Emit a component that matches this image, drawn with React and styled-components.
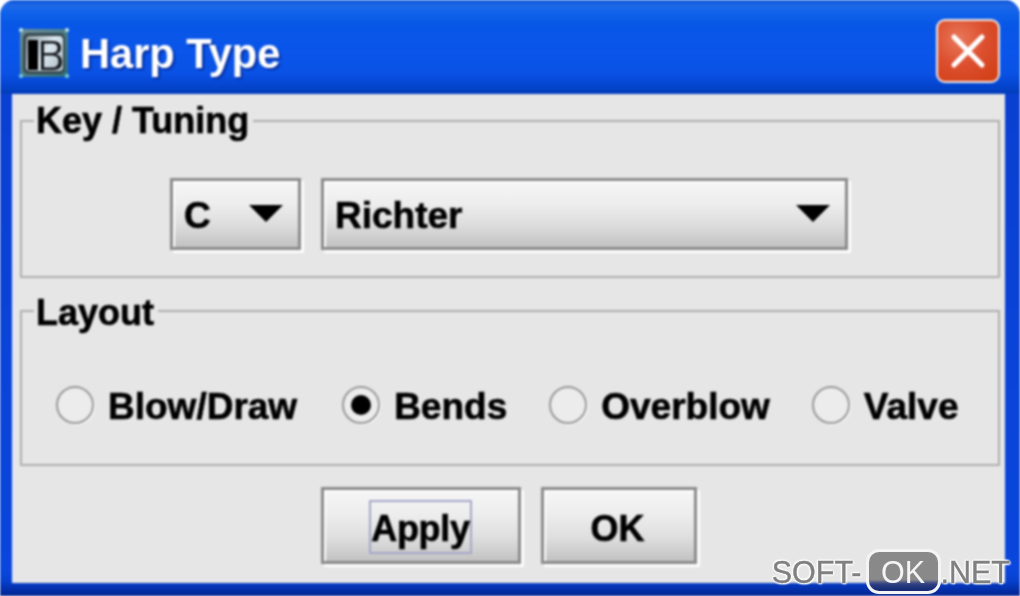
import React from 'react';
import styled, { createGlobalStyle } from 'styled-components';

const Global = createGlobalStyle`
  html, body { margin: 0; padding: 0; background: #fff; }
  body { width: 1020px; height: 596px; overflow: hidden; font-family: "Liberation Sans", Arial, sans-serif; }
  * { box-sizing: border-box; }
`;

const Page = styled.div`
  position: relative;
  width: 1020px;
  height: 596px;
  overflow: hidden;
`;

const Frame = styled.div`
  width: 1020px;
  height: 596px;
  display: flex;
  flex-direction: column;
  border-radius: 15px 15px 0 0;
  background: linear-gradient(180deg, #0a3fd0 0, #0a46dc 96%, #0640cc 97.5%, #03238f 100%);
  filter: blur(0.8px);
`;

const TitleBar = styled.div`
  height: 94px;
  flex: none;
  display: flex;
  align-items: center;
  padding: 8px 20px 0 19px;
  border-radius: 15px 15px 0 0;
  background: linear-gradient(180deg, #0d55d8 0, #1f69e6 6%, #0f62ea 14%, #0857e6 26%, #0a55ea 55%, #0a52e6 78%, #0444cc 92%, #033cb8 100%);
`;

const AppIcon = styled.svg`
  width: 50px;
  height: 50px;
  flex: none;
  margin-top: 4px;
`;

const Title = styled.h1`
  margin: 6px 0 0 11px;
  flex: 1;
  font-size: 41.6px;
  font-weight: 700;
  line-height: 48px;
  color: #fff;
  text-shadow: 2px 2px 2px #0a2f9c;
`;

const CloseBtn = styled.button`
  width: 64px;
  height: 64px;
  padding: 0;
  border: 2px solid #f2e6e0;
  border-radius: 9px;
  background: radial-gradient(circle at 35% 30%, #e8785a 0, #dc5030 45%, #cf3c10 100%);
  display: flex;
  align-items: center;
  justify-content: center;
`;

const Client = styled.div`
  flex: 1;
  margin: 0 15px 13px 14px;
  padding: 8px 5px 0 6px;
  background: #e6e6e6;
  box-shadow: -2px 0 0 #dfe4f8;
  display: flex;
  flex-direction: column;
`;

const Group = styled.fieldset`
  margin: 0 0 ${p => p.$after}px;
  padding: ${p => p.$top}px 0 ${p => p.$bottom}px;
  min-width: 0;
  border: 2px solid #aeaeae;
  display: block;
`;

const Legend = styled.legend`
  margin-left: 12px;
  padding: 0 4px 0 2px;
  font-size: 36px;
  line-height: 38px;
  font-weight: 700;
  color: #000;
  -webkit-text-stroke: 0.6px #000;
  span { position: relative; top: ${p => p.$drop}px; }
`;

const ComboRow = styled.div`
  display: flex;
  gap: 20px;
  padding-left: 148px;
`;

const Combo = styled.div`
  width: ${p => p.$w}px;
  height: 72px;
  display: flex;
  align-items: center;
  justify-content: space-between;
  padding: 4px 15px 0 11px;
  font-size: 37px;
  font-weight: 700;
  color: #000;
  -webkit-text-stroke: 0.6px #000;
  border: 3px solid #8a8a8a;
  background: linear-gradient(180deg, #f6f6f6 0, #ededed 35%, #dedede 65%, #c2c2c2 100%);
  box-shadow: 3px 3px 0 #fdfdfd, inset 2px 2px 0 #fff;
`;

const Arrow = styled.svg`
  width: 34px;
  height: 18px;
  flex: none;
  margin-bottom: 6px;
`;

const RadioRow = styled.div`
  display: flex;
  align-items: center;
  height: 40px;
  padding-left: 34px;
`;

const RadioItem = styled.label`
  display: flex;
  align-items: center;
  gap: 14px;
  margin-right: ${p => p.$mr}px;
  font-size: 37px;
  font-weight: 700;
  color: #000;
  -webkit-text-stroke: 0.6px #000;
  white-space: nowrap;
`;

const RadioText = styled.span`
  padding-top: 4px;
`;

const RadioMark = styled.span`
  width: 38px;
  height: 38px;
  border-radius: 50%;
  flex: none;
  border: 2.5px solid #989898;
  background: #ececec;
  box-shadow: 1px 1px 0 #fff;
  display: flex;
  align-items: center;
  justify-content: center;
  &::after {
    content: "";
    display: ${p => (p.$on ? 'block' : 'none')};
    width: 20px;
    height: 20px;
    border-radius: 50%;
    background: #000;
  }
`;

const ButtonRow = styled.div`
  display: flex;
  justify-content: center;
  gap: 20px;
  padding-right: 3px;
`;

const PushButton = styled.button`
  width: ${p => p.$w}px;
  height: 77px;
  padding: 2px 0 0;
  display: flex;
  align-items: center;
  justify-content: center;
  font-family: inherit;
  font-size: 36px;
  font-weight: 700;
  color: #000;
  -webkit-text-stroke: 0.6px #000;
  border: 3px solid #8a8a8a;
  background: linear-gradient(180deg, #f6f6f6 0, #ededed 35%, #dedede 68%, #c2c2c2 100%);
  box-shadow: 3px 3px 0 #fdfdfd, inset 2px 2px 0 #fff;
`;

const Focus = styled.span`
  display: block;
  width: 103px;
  height: 54px;
  line-height: 54px;
  border: 2px solid #a6a6c8;
  text-align: center;
  white-space: nowrap;
  letter-spacing: -0.3px;
`;

const OkLabel = styled.span`
  padding-top: 4px;
  margin-left: -2px;
`;

const Watermark = styled.div`
  position: absolute;
  right: 10px;
  bottom: 2px;
  display: flex;
  align-items: center;
  font-size: 30.5px;
  line-height: 44px;
  color: #808080;
  -webkit-text-stroke: 0.4px #808080;
  text-shadow: 0 0 3px #fff, 0 0 3px #fff, 0 0 2px #fff, 1px 1px 2px #fff, -1px -1px 2px #fff;
  filter: blur(0.5px);
`;

const WatermarkPill = styled.span`
  width: 75px;
  height: 45px;
  margin: 0 0 0 4px;
  display: flex;
  align-items: center;
  justify-content: center;
  border: 3px solid #f4f4f4;
  border-radius: 13px;
  color: #f4f4f4;
  -webkit-text-stroke: 0;
  text-shadow: none;
  background: linear-gradient(180deg, rgba(132,132,132,0.95) 0, rgba(132,132,132,0.95) 70%, rgba(60,70,120,0.85) 78%, rgba(20,40,110,0.9) 100%);
`;

function DownArrow() {
  return (
    <Arrow viewBox="0 0 34 18">
      <polygon points="0,1 34,1 17,18" fill="#000" />
    </Arrow>
  );
}

function Radio({ label, on, mr }) {
  return (
    <RadioItem $mr={mr}>
      <RadioMark $on={on} />
      <RadioText>{label}</RadioText>
    </RadioItem>
  );
}

export default function App() {
  return (
    <Page>
      <Global />
      <Frame>
        <TitleBar>
          <AppIcon viewBox="0 0 50 50">
            <defs>
              <linearGradient id="ib" x1="0" y1="0" x2="1" y2="1">
                <stop offset="0" stopColor="#6f8f98" />
                <stop offset="1" stopColor="#2a6f80" />
              </linearGradient>
              <linearGradient id="ibf" x1="0" y1="0" x2="1" y2="0.6">
                <stop offset="0" stopColor="#8c9aa0" />
                <stop offset="0.6" stopColor="#dce8f0" />
                <stop offset="1" stopColor="#b8c6ce" />
              </linearGradient>
            </defs>
            <rect x="1" y="1" width="48" height="48" fill="url(#ib)" />
            <rect x="4" y="5" width="42" height="41" rx="5" fill="#3a4a50" />
            <rect x="7" y="8" width="37" height="35" rx="4" fill="url(#ibf)" />
            <rect x="9" y="12" width="10" height="30" fill="#000" />
            <path d="M22 13 H34 Q42 13 42 20 Q42 25 37 26 Q43 28 43 34 Q43 42 34 42 H22 Z M25 15.5 V25 H33 Q38.5 25 38.5 20 Q38.5 15.5 33 15.5 Z M25 27.5 V39.5 H33 Q39.5 39.5 39.5 33.5 Q39.5 27.5 33 27.5 Z" fill="#14181c" fillRule="evenodd" />
            <circle cx="2" cy="2" r="2" fill="#bfeaf0" />
            <circle cx="48" cy="2" r="2" fill="#bfeaf0" />
            <circle cx="2" cy="48" r="2" fill="#7fd0dc" />
            <circle cx="48" cy="48" r="2" fill="#7fd0dc" />
          </AppIcon>
          <Title>Harp Type</Title>
          <CloseBtn aria-label="Close">
            <svg width="38" height="38" viewBox="0 0 38 38">
              <path d="M5 5 L33 33 M33 5 L5 33" stroke="#fff" strokeWidth="5" strokeLinecap="round" />
            </svg>
          </CloseBtn>
        </TitleBar>
        <Client>
          <Group $top={38} $bottom={26} $after={14}>
            <Legend $drop={0}><span>Key / Tuning</span></Legend>
            <ComboRow>
              <Combo $w={131}>C<DownArrow /></Combo>
              <Combo $w={527}>Richter<DownArrow /></Combo>
            </ComboRow>
          </Group>
          <Group $top={55} $bottom={39} $after={21}>
            <Legend $drop={2}><span>Layout</span></Legend>
            <RadioRow>
              <Radio label="Blow/Draw" mr={45} />
              <Radio label="Bends" on mr={42} />
              <Radio label="Overblow" mr={42} />
              <Radio label="Valve" mr={0} />
            </RadioRow>
          </Group>
          <ButtonRow>
            <PushButton $w={200}><Focus>Apply</Focus></PushButton>
            <PushButton $w={156}><OkLabel>OK</OkLabel></PushButton>
          </ButtonRow>
        </Client>
      </Frame>
      <Watermark>
        SOFT-<WatermarkPill>OK</WatermarkPill>.NET
      </Watermark>
    </Page>
  );
}
